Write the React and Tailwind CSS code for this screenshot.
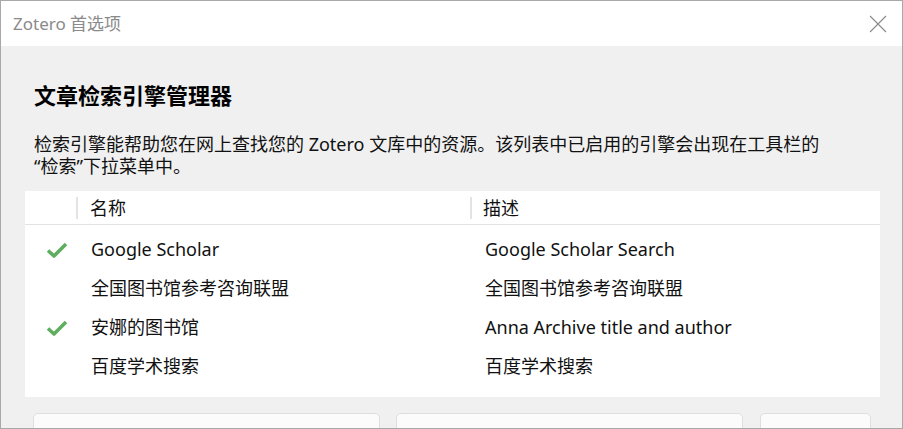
const engines = [
  { name: "Google Scholar", desc: "Google Scholar Search", enabled: true },
  { name: "全国图书馆参考咨询联盟", desc: "全国图书馆参考咨询联盟", enabled: false },
  { name: "安娜的图书馆", desc: "Anna Archive title and author", enabled: true },
  { name: "百度学术搜索", desc: "百度学术搜索", enabled: false },
];

function Check() {
  return (
    <svg width="22" height="16" viewBox="0 0 22 16">
      <path
        d="M2 8.5 L8 14 L20 2"
        fill="none"
        stroke="#5fae5f"
        strokeWidth="3.6"
        strokeLinejoin="round"
      />
    </svg>
  );
}

function EngineRow({ engine }) {
  return (
    <div className="flex h-[39px] items-center text-[18px] text-[#111]">
      <div className="flex w-[53px] shrink-0 justify-center pl-[19px] pr-[8px]">
        {engine.enabled && <Check />}
      </div>
      <div className="w-[394px] shrink-0 pl-[13px]">{engine.name}</div>
      <div className="pl-[13px]">{engine.desc}</div>
    </div>
  );
}

export default function App() {
  return (
    <div
      className="flex h-[429px] w-[903px] flex-col overflow-hidden border border-[#a8a8a8] bg-[#f0f0f0]"
      style={{ fontFamily: '"Noto Sans", "Noto Sans CJK SC", sans-serif' }}
    >
      {/* Title bar */}
      <div className="flex h-[45px] shrink-0 items-center justify-between bg-white pl-[12px] pr-[15px]">
        <span className="text-[17px] text-[#8a8a8a]">Zotero 首选项</span>
        <svg width="18" height="18" viewBox="0 0 18 18">
          <path d="M1 1 L17 17 M17 1 L1 17" stroke="#8a8a8a" strokeWidth="1.1" />
        </svg>
      </div>

      <div className="flex flex-col px-[24px] pt-[34px]">
        <h1 className="pl-[9px] text-[22px] font-bold leading-[30px] text-black">
          文章检索引擎管理器
        </h1>
        <p className="mt-[23px] pl-[9px] text-[18px] leading-[22px] text-[#111]">
          检索引擎能帮助您在网上查找您的 Zotero 文库中的资源。该列表中已启用的引擎会出现在工具栏的
          <br />
          “检索”下拉菜单中。
        </p>

        {/* Table */}
        <div className="mt-[14px] w-[855px] bg-white pb-[11px]">
          <div className="flex h-[34px] items-center border-b border-[#e3e3e3] text-[18px] text-[#111]">
            <div className="h-[22px] w-[53px] shrink-0 border-r-2 border-[#e3e3e3]" />
            <div className="w-[394px] shrink-0 border-r-2 border-[#e3e3e3] pl-[12px] leading-[22px]">
              名称
            </div>
            <div className="pl-[11px] leading-[22px]">描述</div>
          </div>
          <div className="pt-[5px]">
            {engines.map((engine, index) => (
              <EngineRow key={index} engine={engine} />
            ))}
          </div>
        </div>

        {/* Buttons */}
        <div className="mt-[16px] flex pl-[8px]">
          <button className="h-[40px] w-[347px] rounded-[5px] border border-[#dedede] bg-[#fbfbfb] pt-[7px] text-[18px] leading-[24px] text-[#111]">
            编辑
          </button>
          <button className="ml-[16px] h-[40px] w-[347px] rounded-[5px] border border-[#dedede] bg-[#fbfbfb] pt-[7px] text-[18px] leading-[24px] text-[#111]">
            恢复默认
          </button>
          <button className="ml-[17px] h-[40px] w-[111px] rounded-[5px] border border-[#dedede] bg-[#fbfbfb] pt-[7px] text-[18px] leading-[24px] text-[#111]">
            刷新
          </button>
        </div>
      </div>
    </div>
  );
}
